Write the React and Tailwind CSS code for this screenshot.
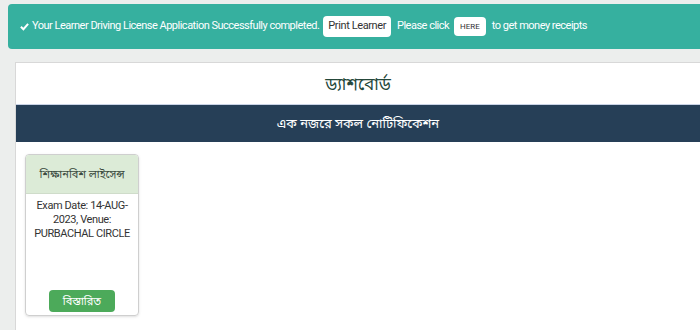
export default function App() {
  return (
    <div className="w-[700px] h-[330px] overflow-hidden bg-[#eceeed] pt-1 pl-2 font-['Roboto','Liberation_Sans',sans-serif]">
      <div className="h-[45px] rounded-l bg-[#36b09f] flex items-center pl-3 text-[11px] text-white tracking-[-0.5px] whitespace-nowrap">
        <svg width="9" height="9" viewBox="0 0 10 10" className="mr-[3px]">
          <path d="M1 5.2 L3.8 8 L9 2" fill="none" stroke="white" strokeWidth="2.2" />
        </svg>
        <span>Your Learner Driving License Application Successfully completed.</span>
        <button className="ml-[4px] h-[21px] px-[5px] bg-white text-[#333] rounded-sm text-[11px] tracking-[-0.4px]">Print Learner</button>
        <span className="ml-[6px]">Please click</span>
        <button className="ml-[5px] h-[19px] px-[6px] bg-white text-[#333] rounded-sm text-[8px] tracking-normal">HERE</button>
        <span className="ml-[6px]">to get money receipts</span>
      </div>
      <div className="mt-[13px] ml-[7px] bg-white border-l border-t border-[#d8d8d8] h-[300px]">
        <div className="h-[41px] flex items-center justify-center text-[17px] text-[#24473a] font-['Noto_Sans','Noto_Sans_Bengali',sans-serif]">
          ড্যাশবোর্ড
        </div>
        <div className="h-[38px] bg-[#263f57] flex items-center justify-center text-white text-[13px] font-['Noto_Sans','Noto_Sans_Bengali',sans-serif] border-t border-[#c9d3e6]">
          এক নজরে সকল নোটিফিকেশন
        </div>
        <div className="pt-[12px] pl-[9px]">
          <div className="w-[114px] h-[162px] border border-[#cfcfcf] rounded flex flex-col overflow-hidden shadow-sm">
            <div className="h-[39px] bg-[#dcebd7] border-b border-[#cfdcca] flex items-center justify-center text-[11px] text-[#3a4a3e] font-['Noto_Sans','Noto_Sans_Bengali',sans-serif]">
              শিক্ষানবিশ লাইসেন্স
            </div>
            <div className="px-[2px] pt-[5px] text-center text-[11px] tracking-[-0.4px] leading-[14px] text-[#333]">
              Exam Date: 14-AUG-2023, Venue: PURBACHAL CIRCLE
            </div>
            <div className="mt-auto mb-[3px] flex justify-center">
              <button className="w-[66px] h-[22px] bg-[#4caa5a] rounded-sm text-white text-[11px] font-['Noto_Sans','Noto_Sans_Bengali',sans-serif]">
                বিস্তারিত
              </button>
            </div>
          </div>
        </div>
      </div>
    </div>
  );
}
